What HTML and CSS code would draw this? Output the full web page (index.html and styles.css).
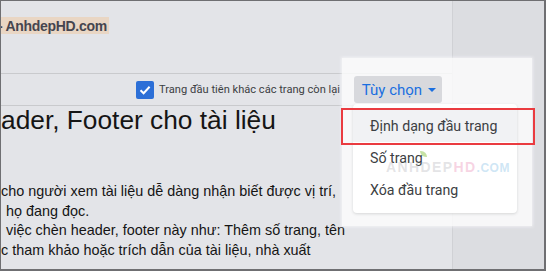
FILE: index.html
```html
<!DOCTYPE html>
<html lang="vi">
<head>
  <meta charset="UTF-8" />
  <meta name="viewport" content="width=device-width, initial-scale=1.0" />
  <title>Header, Footer cho tài liệu</title>
  <link rel="stylesheet" href="styles.css">
</head>
<body>

  <div class="frame">
    <div class="page">
      <div class="brand"><span class="brand-tag">- AnhdepHD.com</span></div>

      <div class="toolbar">
        <label class="check">
          <span class="box">
            <svg width="12" height="10" viewBox="0 0 12 10"><path d="M1.5 5.2 L4.6 8.2 L10.6 1.8" fill="none" stroke="#fff" stroke-width="2"/></svg>
          </span>
          Trang đầu tiên khác các trang còn lại
        </label>
        <button class="options">Tùy chọn <span class="caret"></span></button>
      </div>

      <div class="doc">
        <h1>ader, Footer cho tài liệu</h1>
        <p>
          <span class="line">cho người xem tài liệu dễ dàng nhận biết được vị trí,</span>
          <span class="line indent">họ đang đọc.</span>
          <span class="line indent">việc chèn header, footer này như: Thêm số trang, tên</span>
          <span class="line">c tham khảo hoặc trích dẫn của tài liệu, nhà xuất</span>
        </p>
      </div>
    </div>
    <div class="side"></div>

    <div class="glow"></div>

    <div class="menu">
      <a class="item active">Định dạng đầu trang</a>
      <a class="item">Số trang</a>
      <a class="item">Xóa đầu trang</a>
    </div>

    <div class="mark"><span class="leaf"></span>ANHDEP<span class="hd">HD</span><span class="com">.COM</span></div>

    <div class="highlight"></div>
  </div>

</body>
</html>
```

FILE: styles.css
```css
body {
  margin: 0;
  padding: 0;
  font-family: Arial, "Liberation Sans", sans-serif;
}

.frame {
  width: 546px;
  height: 271px;
  box-sizing: border-box;
  border: 1px solid #6f6f72;
  border-right-width: 2px;
  border-bottom-width: 2px;
  background: #e3e4e8;
  display: grid;
  grid-template-columns: 451px 1fr;
  position: relative;
  overflow: hidden;
}

.side {
  background: #dcdde1;
  border-left: 1px solid #d0d1d5;
}

.brand {
  height: 73px;
  padding-top: 16px;
  box-sizing: border-box;
  border-bottom: 1px solid #c9cacd;
}

.brand-tag {
  display: inline-block;
  margin-left: -3px;
  padding-right: 2px;
  height: 17px;
  line-height: 18px;
  background: #e9d6c4;
  color: #45454f;
  font-family: "Liberation Sans", Arial, sans-serif;
  font-weight: bold;
  font-size: 14px;
  letter-spacing: -0.3px;
}

.toolbar {
  height: 31px;
  border-bottom: 1px solid #c9cacd;
  display: flex;
  align-items: center;
  justify-content: flex-end;
  padding-right: 10px;
  gap: 14px;
}

.check {
  display: flex;
  align-items: center;
  gap: 5px;
  font-family: Roboto, sans-serif;
  font-size: 11.1px;
  color: #3c4043;
}

.box {
  width: 18px;
  height: 18px;
  border-radius: 2px;
  background: #2c6fd7;
  display: flex;
  align-items: center;
  justify-content: center;
}

.options {
  position: relative;
  z-index: 2;
  width: 88px;
  height: 27px;
  border: none;
  border-radius: 3px;
  background: #d8d9dd;
  color: #1a6fe0;
  font-family: Roboto, sans-serif;
  font-size: 15px;
  padding: 0 0 0 2px;
  display: flex;
  align-items: center;
  justify-content: center;
  gap: 6px;
}

.caret {
  width: 0;
  height: 0;
  border-left: 4px solid transparent;
  border-right: 4px solid transparent;
  border-top: 4px solid #1a6fe0;
  margin-top: 1px;
}

.doc {
  color: #151515;
}

.doc h1 {
  margin: 0;
  font-weight: normal;
  font-size: 26.3px;
  line-height: 28px;
  white-space: nowrap;
}

.doc p {
  margin: 48px 0 0;
  font-size: 14.4px;
  line-height: 19.5px;
}

.line {
  display: block;
  white-space: nowrap;
}

.indent {
  padding-left: 5px;
}

.glow {
  position: absolute;
  left: 341px;
  top: 57px;
  width: 190px;
  height: 168px;
  background: rgba(252, 252, 253, 0.82);
  box-shadow: 0 0 3px 1px rgba(252, 252, 253, 0.6);
  z-index: 1;
}

.menu {
  position: absolute;
  left: 352px;
  top: 103px;
  width: 164px;
  padding: 6px 0 7px;
  background: #fff;
  border-radius: 4px;
  box-shadow: 0 1px 3px rgba(60, 64, 67, 0.18);
  z-index: 3;
  display: flex;
  flex-direction: column;
}

.item {
  height: 32px;
  line-height: 32px;
  padding-left: 17px;
  font-family: Roboto, sans-serif;
  font-size: 14.2px;
  color: #3c4043;
}

.item.active {
  background: #f1f2f4;
}

.mark {
  position: absolute;
  left: 385px;
  top: 158px;
  z-index: 4;
  font-family: "Liberation Sans", Arial, sans-serif;
  font-weight: bold;
  font-size: 14px;
  letter-spacing: 1.4px;
  color: rgba(195, 195, 200, 0.45);
}

.mark .hd {
  color: rgba(240, 170, 200, 0.5);
}

.mark .com {
  color: rgba(160, 205, 235, 0.5);
  font-size: 12px;
  letter-spacing: 0.5px;
}

.leaf {
  position: absolute;
  left: 34px;
  top: -8px;
  width: 7px;
  height: 6px;
  border-radius: 0 6px 0 6px;
  background: rgba(150, 200, 90, 0.55);
}

.highlight {
  position: absolute;
  left: 340px;
  top: 107px;
  width: 194px;
  height: 37px;
  box-sizing: border-box;
  border: 2px solid #ea3b40;
  z-index: 5;
}
```
